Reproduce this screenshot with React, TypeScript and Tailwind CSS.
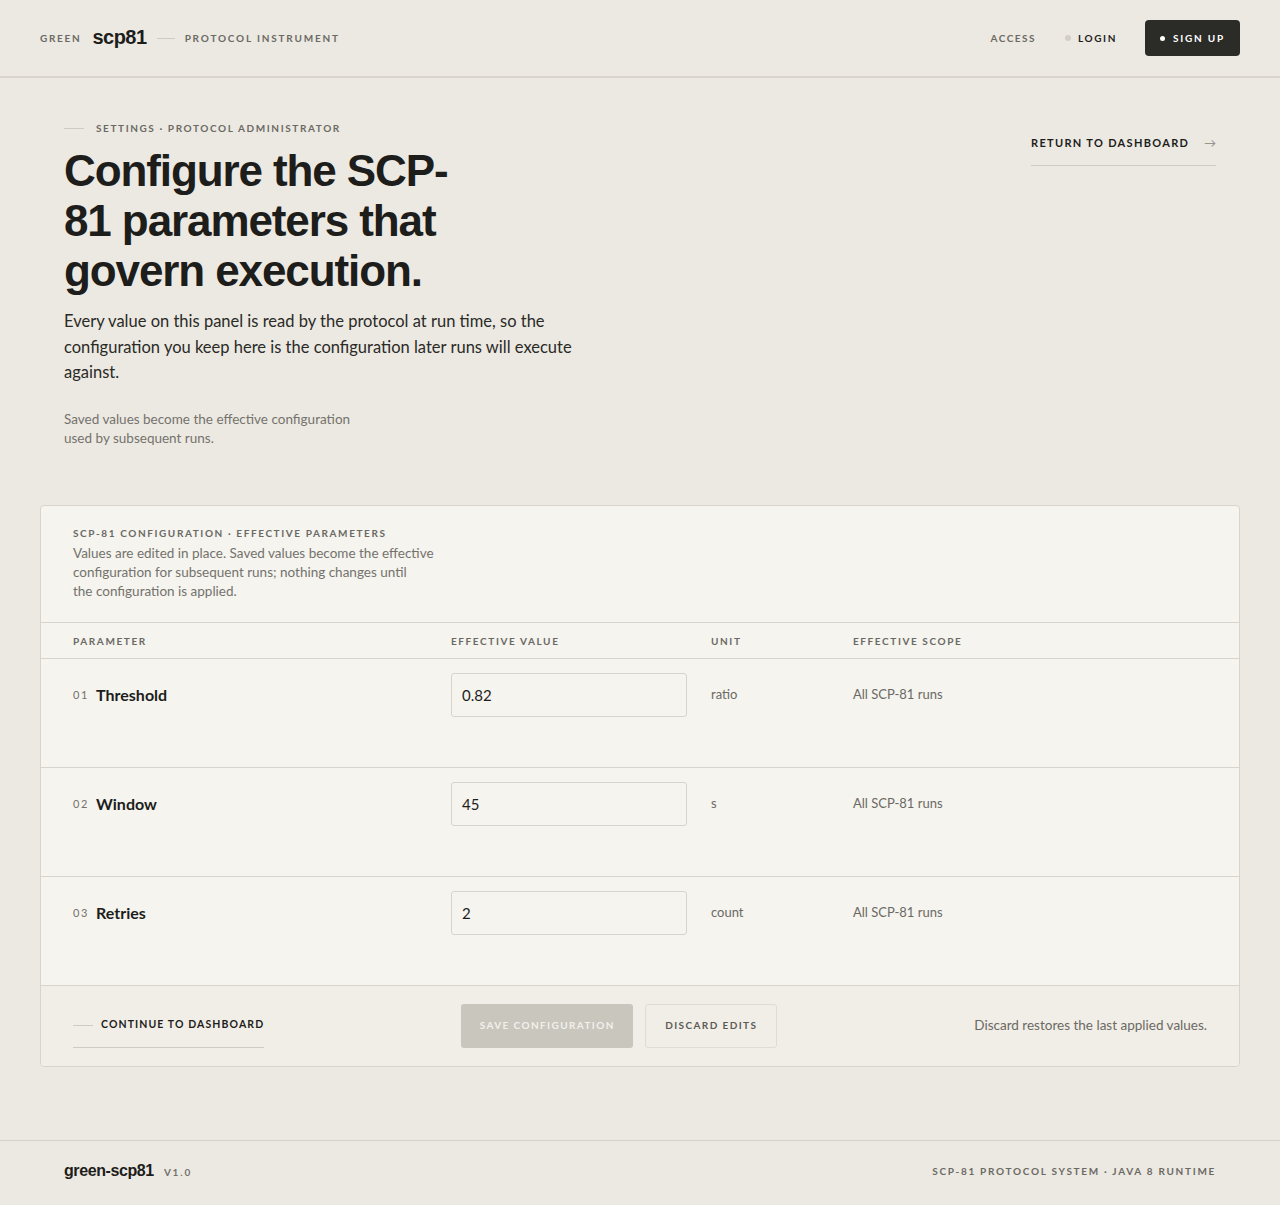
import React from "react";

const body = { fontFamily: "Lato, 'Noto Sans', sans-serif" };
const head = { fontFamily: "'Liberation Sans', Arial, sans-serif" };

const rows = [
  { n: "01", name: "Threshold", value: "0.82", unit: "ratio" },
  { n: "02", name: "Window", value: "45", unit: "s" },
  { n: "03", name: "Retries", value: "2", unit: "count" },
];

export default function App() {
  return (
    <div className="min-h-screen bg-[#ece9e2] text-[#1d1d1b]" style={body}>
      {/* Header */}
      <header className="h-[78px] border-b-2 border-[#d9d5cc] px-10 flex items-center justify-between">
        <div className="flex items-center">
          <span className="text-[10px] font-bold tracking-[0.17em] text-[#6b6964]">GREEN</span>
          <span className="ml-[11px] text-[20px] font-bold tracking-tight text-[#1d1d1b] -mt-[3px]" style={head}>
            scp81
          </span>
          <span className="ml-[10px] w-[18px] h-px bg-[#cfcbc2]" />
          <span className="ml-[10px] text-[10px] font-bold tracking-[0.18em] text-[#6b6964]">PROTOCOL INSTRUMENT</span>
        </div>
        <div className="flex items-center">
          <span className="text-[10px] font-bold tracking-[0.15em] text-[#6b6964]">ACCESS</span>
          <span className="ml-[29px] w-[6px] h-[6px] rounded-full bg-[#d3cfc6]" />
          <span className="ml-[7px] text-[10px] font-bold tracking-[0.16em] text-[#1d1d1b]">LOGIN</span>
          <button className="ml-[28px] h-[36px] px-[15px] rounded-[4px] bg-[#2b2b27] flex items-center gap-[8px] text-white text-[10px] font-bold tracking-[0.18em]">
            <span className="w-[5px] h-[5px] rounded-full bg-white" />
            SIGN UP
          </button>
        </div>
      </header>

      {/* Hero */}
      <section className="px-16 pt-[44px] pb-[57px] flex justify-between items-start">
        <div>
          <div className="flex items-center gap-3 h-[12px]">
            <span className="w-5 h-px bg-[#cfcbc2]" />
            <span className="text-[10px] font-bold tracking-[0.16em] text-[#6b6964]">SETTINGS · PROTOCOL ADMINISTRATOR</span>
          </div>
          <h1
            className="mt-3 max-w-[430px] text-[44px] leading-[50px] font-bold tracking-[-0.025em] text-[#1d1d1b]"
            style={head}
          >
            Configure the SCP-81 parameters that govern execution.
          </h1>
          <p className="mt-[13px] max-w-[540px] text-[16.5px] leading-[25.5px] text-[#2a2a27]">
            Every value on this panel is read by the protocol at run time, so the configuration you keep here is the
            configuration later runs will execute against.
          </p>
          <p className="mt-[24px] max-w-[300px] text-[13.5px] leading-[19px] text-[#74726c]">
            Saved values become the effective configuration used by subsequent runs.
          </p>
        </div>
        <a className="mt-[12px] w-[185px] pb-[13px] border-b border-[#cfcbc2] flex items-center justify-between">
          <span className="text-[11px] font-bold tracking-[0.12em] text-[#1d1d1b]">RETURN TO DASHBOARD</span>
          <span className="text-[12px] text-[#8a8780]">→</span>
        </a>
      </section>

      {/* Card */}
      <div className="mx-10 border border-[#d8d4cb] rounded-[4px] bg-[#f5f4ef] overflow-hidden">
        <div className="px-8 pt-[22px] pb-[21px] border-b border-[#d8d4cb]">
          <div className="h-[12px] flex items-center text-[10px] font-bold tracking-[0.16em] text-[#6b6964]">
            SCP-81 CONFIGURATION · EFFECTIVE PARAMETERS
          </div>
          <p className="mt-[4px] max-w-[370px] text-[13.5px] leading-[19px] text-[#74726c]">
            Values are edited in place. Saved values become the effective
            <br />
            configuration for subsequent runs; nothing changes until
            <br />
            the configuration is applied.
          </p>
        </div>

        <div className="grid grid-cols-[378px_260px_142px_1fr] px-8 h-[36px] items-center border-b border-[#d8d4cb] text-[10px] font-bold tracking-[0.16em] text-[#6b6964]">
          <span className="mt-[2px]">PARAMETER</span>
          <span className="mt-[2px]">EFFECTIVE VALUE</span>
          <span className="mt-[2px]">UNIT</span>
          <span className="mt-[2px]">EFFECTIVE SCOPE</span>
        </div>

        {rows.map((r) => (
          <div
            key={r.n}
            className="grid grid-cols-[378px_260px_142px_1fr] px-8 pt-[14px] pb-[50px] items-start border-b border-[#d8d4cb]"
          >
            <div className="h-[44px] flex items-center gap-[7px]">
              <span className="text-[11px] tracking-[0.15em] text-[#74726c] mt-[2px]">{r.n}</span>
              <span className="text-[16px] font-bold text-[#1d1d1b]">{r.name}</span>
            </div>
            <div>
              <input
                defaultValue={r.value}
                className="w-[236px] h-[44px] border border-[#d8d4cb] rounded-[3px] bg-[#f5f4ef] px-[10px] text-[15px] text-[#1d1d1b] outline-none"
                style={body}
              />
            </div>
            <div className="h-[44px] flex items-center text-[13px] text-[#6b6964] pt-[1px]">{r.unit}</div>
            <div className="h-[44px] flex items-center text-[13px] text-[#6b6964] pt-[1px]">All SCP-81 runs</div>
          </div>
        ))}

        <div className="h-[80px] bg-[#f1eee7] px-8 flex items-center justify-between">
          <a className="h-[44px] flex items-center gap-[8px] border-b border-[#cfcbc2] whitespace-nowrap">
            <span className="w-5 h-px bg-[#cfcbc2]" />
            <span className="text-[10.5px] font-bold tracking-[0.105em] text-[#1d1d1b]">CONTINUE TO DASHBOARD</span>
          </a>
          <div className="flex items-center gap-3">
            <button className="h-[44px] w-[172px] rounded-[3px] bg-[#c9c6be] text-[#f2f0ea] text-[10px] font-bold tracking-[0.14em]">
              SAVE CONFIGURATION
            </button>
            <button className="h-[44px] w-[132px] rounded-[3px] border border-[#e0dcd3] text-[#5d5b56] text-[10px] font-bold tracking-[0.14em]">
              DISCARD EDITS
            </button>
          </div>
          <span className="text-[13.5px] text-[#6b6964]">Discard restores the last applied values.</span>
        </div>
      </div>

      {/* Footer */}
      <footer className="mt-[73px] h-[62px] border-t border-[#d6d2c9] px-16 flex items-center justify-between">
        <div className="flex items-center gap-[10px]">
          <span className="text-[16px] font-bold tracking-tight text-[#1d1d1b]" style={head}>
            green-scp81
          </span>
          <span className="text-[10px] font-bold tracking-[0.18em] text-[#74726c] mt-[2px]">V1.0</span>
        </div>
        <span className="text-[10px] font-bold tracking-[0.17em] text-[#6b6964]">
          SCP-81 PROTOCOL SYSTEM · JAVA 8 RUNTIME
        </span>
      </footer>
    </div>
  );
}
